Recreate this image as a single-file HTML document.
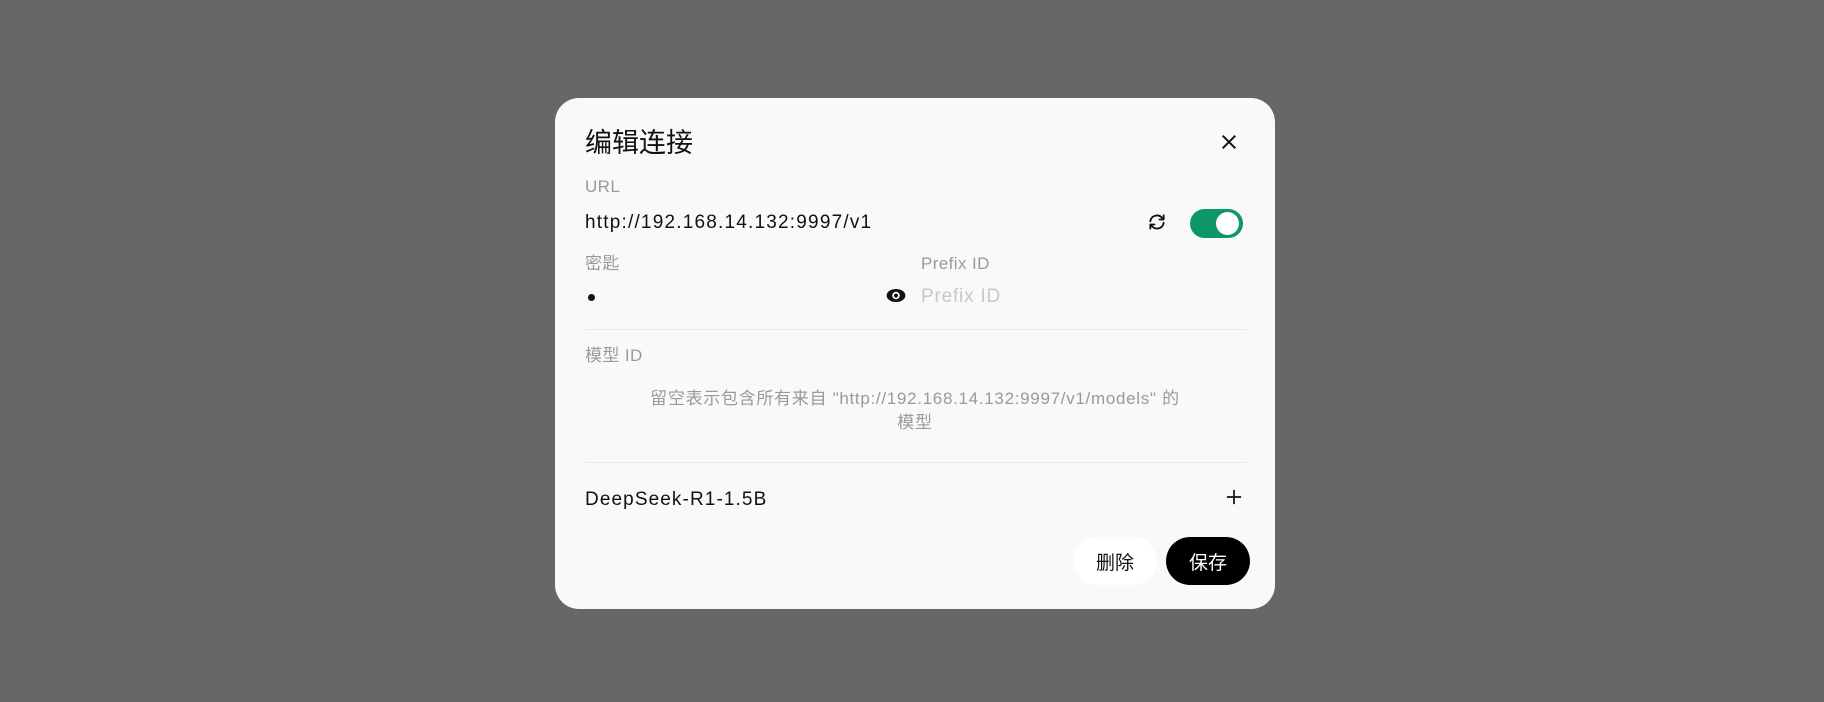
<!DOCTYPE html>
<html><head><meta charset="utf-8"><style>
*{box-sizing:border-box;margin:0;padding:0}
body{width:1824px;height:702px;background:#676767;font-family:"Liberation Sans","Noto Sans CJK SC",sans-serif;position:relative;overflow:hidden}
.m{position:absolute;left:555px;top:98px;width:720px;height:511px;background:#f9f9f9;border-radius:24px}
.a{position:absolute;white-space:nowrap;line-height:1}
.l{color:#9a9a9a;font-size:17px;letter-spacing:0.4px}
.hr{position:absolute;height:1px;background:#e8e8e8;left:30px;width:661px}
.btn{position:absolute;top:439px;height:48px;width:84px;border-radius:24px;font-size:19px;display:flex;align-items:center;justify-content:center}
</style></head><body>
<div class="m">
<div class="a" style="left:30px;top:32px;font-size:27px;color:#111">编辑连接</div>
<svg class="a" style="left:665px;top:35px" width="18" height="18" viewBox="0 0 20 20"><path d="M3 3L17 17M17 3L3 17" stroke="#111" stroke-width="2.2" fill="none"/></svg>
<div class="a l" style="left:30px;top:80px">URL</div>
<div class="a" style="left:30px;top:115px;font-size:19px;color:#111;letter-spacing:1.2px">http://192.168.14.132:9997/v1</div>
<svg class="a" style="left:592px;top:114px" width="20" height="20" viewBox="0 0 24 24" fill="none" stroke="#111" stroke-width="2.2" stroke-linecap="round" stroke-linejoin="round"><path d="M4 11a8 8 0 0 1 14-4l2 2M20 4v5h-5M20 13a8 8 0 0 1-14 4l-2-2M4 20v-5h5"/></svg>
<div class="a" style="left:635px;top:111px;width:53px;height:29px;border-radius:15px;background:#0d9668"><div style="position:absolute;right:4px;top:3px;width:23px;height:23px;border-radius:50%;background:#fff"></div></div>
<div class="a l" style="left:30px;top:157px">密匙</div>
<div class="a l" style="left:366px;top:157px">Prefix ID</div>
<div class="a" style="left:33px;top:196px;width:7px;height:7px;border-radius:50%;background:#111"></div>
<svg class="a" style="left:331px;top:190px" width="20" height="15" viewBox="0 0 21 16"><ellipse cx="10.5" cy="8" rx="10" ry="7" fill="#111"/><circle cx="10.5" cy="8" r="4" fill="#fff"/><circle cx="10.5" cy="8" r="2.2" fill="#111"/></svg>
<div class="a" style="left:366px;top:189px;font-size:19px;color:#c8c8c8;letter-spacing:0.8px">Prefix ID</div>
<div class="hr" style="top:231px"></div>
<div class="a l" style="left:30px;top:249px">模型 ID</div>
<div class="a" style="left:0;width:720px;top:289px;text-align:center;font-size:17px;color:#9a9a9a;line-height:24px;white-space:normal;padding:0 40px;letter-spacing:0.7px">留空表示包含所有来自 "http://192.168.14.132:9997/v1/models" 的<br>模型</div>
<div class="hr" style="top:364px"></div>
<div class="a" style="left:30px;top:392px;font-size:19px;color:#111;letter-spacing:1.1px">DeepSeek-R1-1.5B</div>
<svg class="a" style="left:671px;top:391px" width="16" height="16" viewBox="0 0 18 18"><path d="M9 1V17M1 9H17" stroke="#111" stroke-width="1.9"/></svg>
<div class="btn" style="left:518px;background:#fff;color:#111">删除</div>
<div class="btn" style="left:611px;background:#000;color:#fff">保存</div>
</div>
</body></html>
